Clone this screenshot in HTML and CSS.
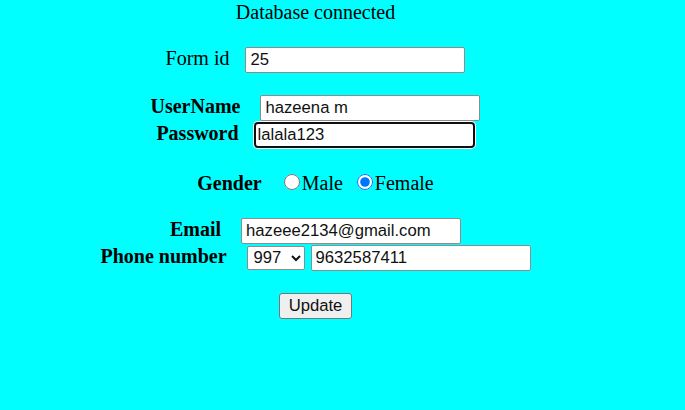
FILE: index.html
```html
<!DOCTYPE html>
<html lang="en">
<head>
<meta charset="utf-8">
<title>Update form</title>
<link rel="stylesheet" href="styles.css">
</head>
<body>
<main class="page">
  <p class="status">Database connected</p>
  <form class="form">
    <div class="row spaced">
      <label class="label plain gap-16" for="fid">Form id</label>
      <input class="field" id="fid" type="text" value="25">
    </div>
    <div class="row spaced">
      <label class="label gap-20" for="uname">UserName</label>
      <input class="field" id="uname" type="text" value="hazeena m">
    </div>
    <div class="row tight">
      <label class="label gap-15" for="pwd">Password</label>
      <input class="field focus" id="pwd" type="text" value="lalala123">
    </div>
    <div class="row gender">
      <span class="label gap-22">Gender</span>
      <input class="radio" type="radio" name="g" id="male">
      <label class="opt male" for="male">Male</label>
      <input class="radio" type="radio" name="g" id="female" checked>
      <label class="opt" for="female">Female</label>
    </div>
    <div class="row spaced">
      <label class="label gap-20" for="email">Email</label>
      <input class="field" id="email" type="text" value="hazeee2134@gmail.com">
    </div>
    <div class="row tight">
      <label class="label gap-20" for="phone">Phone number</label>
      <select class="code">
        <option>997</option>
      </select>
      <input class="field" id="phone" type="text" value="9632587411">
    </div>
    <div class="row spaced">
      <button class="btn" type="button">Update</button>
    </div>
  </form>
</main>
</body>
</html>
```

FILE: styles.css
```css
html, body {
  margin: 0;
  padding: 0;
  background: #00ffff;
}

body {
  font-family: "Liberation Serif", "Times New Roman", serif;
  font-size: 20px;
  color: #000;
}

.page {
  width: 631px;
  padding-top: 1px;
}

.status {
  margin: 0;
  text-align: center;
  line-height: normal;
}

.form {
  margin: 0;
}

.row {
  display: flex;
  justify-content: center;
  align-items: baseline;
}

.row.spaced {
  margin-top: 22px;
}

.form > .row:first-child {
  margin-top: 23px;
}

.row.tight {
  margin-top: 1px;
}

.row.gender {
  margin-top: 24px;
}

.row.gender + .row {
  margin-top: 23px;
}

.label {
  font-weight: bold;
  line-height: normal;
}

.label.plain {
  font-weight: normal;
}

.gap-15 { margin-right: 15px; }
.gap-16 { margin-right: 16px; }
.gap-20 { margin-right: 20px; }
.gap-22 { margin-right: 22px; }

.field {
  box-sizing: border-box;
  width: 220px;
  height: 26px;
  margin: 0;
  padding: 0 4px;
  border: 1px solid #8c8c8c;
  border-radius: 2px;
  background: #fff;
  font-family: "Liberation Sans", Arial, sans-serif;
  font-size: 16.67px;
  color: #111;
  outline: none;
}

.field.focus {
  width: 221px;
  border: 2px solid #101010;
  border-radius: 4px;
  padding: 0 2px;
  box-shadow: 0 0 0 1px #fff;
}

.radio {
  width: 16px;
  height: 16px;
  margin: 0 2px 0 0;
}

.opt {
  line-height: normal;
}

.opt.male {
  margin-right: 14px;
}

.code {
  box-sizing: border-box;
  width: 58px;
  height: 24px;
  margin: 0 6px 0 0;
  padding: 0 0 0 2px;
  border: 1px solid #8c8c8c;
  border-radius: 2px;
  background: #fff;
  font-family: "Liberation Sans", Arial, sans-serif;
  font-size: 16.67px;
  color: #111;
}

.btn {
  box-sizing: border-box;
  width: 73px;
  height: 26px;
  margin: 0;
  padding: 0;
  border: 1px solid #767676;
  border-radius: 3px;
  background: #efefef;
  font-family: "Liberation Sans", Arial, sans-serif;
  font-size: 16.67px;
  color: #111;
}
```
